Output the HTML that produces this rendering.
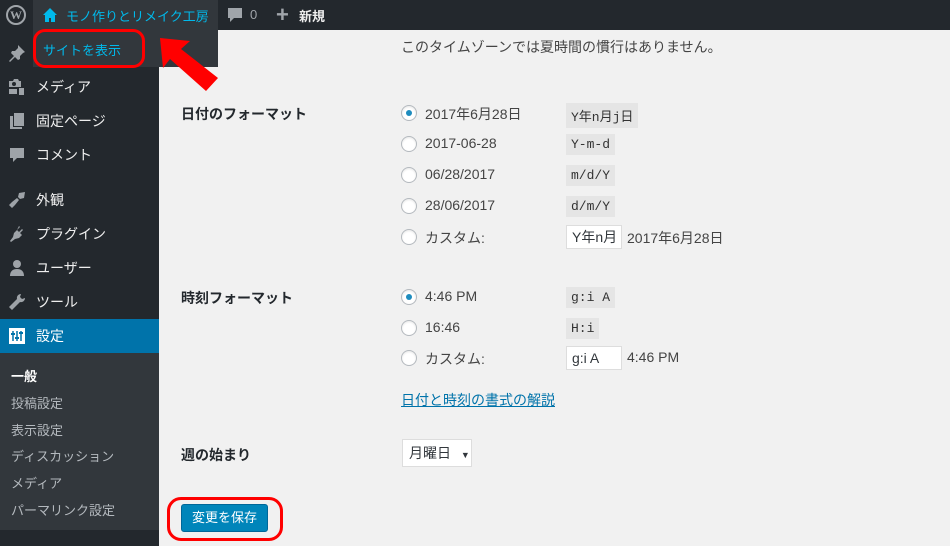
<!DOCTYPE html>
<html><head><meta charset="utf-8"><style>
*{margin:0;padding:0;box-sizing:border-box}
body{width:950px;height:546px;overflow:hidden;background:#f1f1f1;font-family:"Liberation Sans","Noto Sans CJK JP",sans-serif;font-size:14px;color:#23282d;position:relative}
.a{position:absolute;white-space:nowrap}
#bar{position:absolute;left:0;top:0;width:950px;height:30px;background:#23282d}
#side{position:absolute;left:0;top:30px;width:159px;height:516px;background:#23282d}
.mi{position:absolute;left:0;width:159px;height:34px;color:#eee;font-size:14px;line-height:34px;padding-left:36px}
.mi svg{position:absolute;left:8px;top:8px}
.sub{position:absolute;left:11px;color:#b4b9be;font-size:13px}
.radio{position:absolute;left:401px;width:16px;height:16px;border:1px solid #b4b9be;border-radius:50%;background:#fff;box-shadow:inset 0 1px 2px rgba(0,0,0,.1)}
.radio.on::after{content:"";position:absolute;left:4px;top:4px;width:6px;height:6px;border-radius:50%;background:#1e8cbe}
.lbl{position:absolute;left:425px;font-size:14px;color:#444}
code{position:absolute;left:566px;background:#e5e5e5;font-family:"Liberation Mono","Noto Sans CJK JP",monospace;font-size:13px;padding:3px 5px;color:#333}
.inp{position:absolute;left:566px;height:24px;width:56px;background:#fff;border:1px solid #ddd;font-size:14px;line-height:22px;padding-left:5px;color:#32373c}
.th{position:absolute;left:181px;font-weight:bold;font-size:14px;color:#23282d}
</style></head><body>
<div id="bar">
 <div class="a" style="left:6px;top:5px;width:20px;height:20px;border-radius:50%;border:2px solid #a0a5aa;color:#a0a5aa;font:bold 12px 'Liberation Serif',serif;text-align:center;line-height:16px">W</div>
 <div class="a" style="left:33px;top:0;width:185px;height:30px;background:#32373c"></div>
 <svg class="a" style="left:42px;top:7px" width="16" height="16" viewBox="0 0 16 16"><path d="M8 1L1 8h2v7h4v-4h2v4h4V8h2z" fill="#00b9eb"/></svg>
 <div class="a" style="left:66px;top:6px;color:#00b9eb;font-size:13px">モノ作りとリメイク工房</div>
 <svg class="a" style="left:227px;top:7px" width="16" height="16" viewBox="0 0 16 16"><path d="M1 1h14v10H7l-4 4v-4H1z" fill="#a0a5aa"/></svg>
 <div class="a" style="left:250px;top:7px;color:#a0a5aa;font-size:13px">0</div>
 <div class="a" style="left:276px;top:2px;color:#a0a5aa;font-size:22px;font-weight:bold;line-height:26px">+</div>
 <div class="a" style="left:299px;top:6px;color:#eee;font-size:13px;font-weight:bold">新規</div>
</div>
<div id="side">
 <div class="mi" style="top:6px"><svg width="18" height="18" viewBox="0 0 18 18"><path d="M10 1l7 7-2 1-3 3 0 3-2 1-3-3-5 5-1-1 5-5-3-3 1-2h3l3-3z" fill="#9ea3a8"/></svg></div>
 <div class="mi" style="top:40px"><svg width="18" height="18" viewBox="0 0 18 18"><path d="M1 3h4l1-2h4l1 2h2v6H1z M4 6a2 2 0 1 0 4 0a2 2 0 1 0-4 0z M11 10h5v7h-5zM1 11h8v5H1z" fill="#9ea3a8" fill-rule="evenodd"/></svg>メディア</div>
 <div class="mi" style="top:74px"><svg width="18" height="18" viewBox="0 0 18 18"><path d="M6 1h10v13H6z M2 4h3v11h9v2H2z" fill="#9ea3a8"/></svg>固定ページ</div>
 <div class="mi" style="top:108px"><svg width="18" height="18" viewBox="0 0 18 18"><path d="M2 2h14v10H9l-4 4v-4H2z" fill="#9ea3a8"/></svg>コメント</div>
 <div class="mi" style="top:153px"><svg width="18" height="18" viewBox="0 0 18 18"><path d="M11 2l6-1-1 6-4 1-2-2zM9 7l2 2-4 5-3 3-3-3 3-3z" fill="#9ea3a8"/></svg>外観</div>
 <div class="mi" style="top:187px"><svg width="18" height="18" viewBox="0 0 18 18"><path d="M11 1l1 1-3 3 2 2 3-3 1 1-3 3 2 2-3 3-4 1-4 3-1-1 3-4 1-4 3-3z" fill="#9ea3a8"/></svg>プラグイン</div>
 <div class="mi" style="top:221px"><svg width="18" height="18" viewBox="0 0 18 18"><circle cx="9" cy="5" r="4" fill="#9ea3a8"/><path d="M2 17c0-5 3-7 7-7s7 2 7 7z" fill="#9ea3a8"/></svg>ユーザー</div>
 <div class="mi" style="top:255px"><svg width="18" height="18" viewBox="0 0 18 18"><path d="M13 1a4 4 0 0 0-4 5L1 14l3 3 8-8a4 4 0 0 0 5-4l-3 1-2-2z" fill="#9ea3a8"/></svg>ツール</div>
 <div class="mi" style="top:289px;background:#0073aa;color:#fff"><svg width="18" height="18" viewBox="0 0 18 18"><rect x="1" y="1" width="16" height="16" fill="#fff"/><path d="M5 4v10M9 4v10M13 4v10" stroke="#0073aa" stroke-width="1.5"/><path d="M3 7h4M7 11h4M11 6h4" stroke="#0073aa" stroke-width="2"/></svg>設定</div>
 <div class="a" style="left:151px;top:298px;width:0;height:0;border:8px solid transparent;border-right-color:#f1f1f1"></div>
 <div class="a" style="left:0;top:323px;width:159px;height:177px;background:#32373c"></div>
 <div class="sub" style="top:336px;color:#fff;font-weight:bold">一般</div>
 <div class="sub" style="top:363px">投稿設定</div>
 <div class="sub" style="top:390px">表示設定</div>
 <div class="sub" style="top:416px">ディスカッション</div>
 <div class="sub" style="top:443px">メディア</div>
 <div class="sub" style="top:470px">パーマリンク設定</div>
</div>
<div class="a" style="left:33px;top:30px;width:185px;height:37px;background:#32373c"></div>
<div class="a" style="left:43px;top:40px;color:#00b9eb;font-size:13px">サイトを表示</div>
<div class="a" style="left:33px;top:29px;width:112px;height:39px;border:3px solid #f00;border-radius:12px"></div>
<svg class="a" style="left:0;top:0" width="950" height="546"><polygon points="160,38 190,41 181,49 218,78 206,91 170,59 163,68" fill="#f00"/></svg>
<div class="a" style="left:401px;top:37px;font-size:14px;color:#444">このタイムゾーンでは夏時間の慣行はありません。</div>
<div class="th" style="top:104px">日付のフォーマット</div>
<div class="radio on" style="top:105px"></div><div class="lbl" style="top:104px">2017年6月28日</div><code style="top:103px">Y年n月j日</code>
<div class="radio" style="top:136px"></div><div class="lbl" style="top:135px">2017-06-28</div><code style="top:134px">Y-m-d</code>
<div class="radio" style="top:167px"></div><div class="lbl" style="top:166px">06/28/2017</div><code style="top:165px">m/d/Y</code>
<div class="radio" style="top:198px"></div><div class="lbl" style="top:197px">28/06/2017</div><code style="top:196px">d/m/Y</code>
<div class="radio" style="top:229px"></div><div class="lbl" style="top:228px">カスタム:</div><div class="inp" style="top:225px">Y年n月</div><div class="lbl" style="left:627px;top:228px">2017年6月28日</div>
<div class="th" style="top:288px">時刻フォーマット</div>
<div class="radio on" style="top:289px"></div><div class="lbl" style="top:288px">4:46 PM</div><code style="top:287px">g:i A</code>
<div class="radio" style="top:320px"></div><div class="lbl" style="top:319px">16:46</div><code style="top:318px">H:i</code>
<div class="radio" style="top:350px"></div><div class="lbl" style="top:349px">カスタム:</div><div class="inp" style="top:346px">g:i A</div><div class="lbl" style="left:627px;top:349px">4:46 PM</div>
<div class="a" style="left:401px;top:390px;color:#0073aa;text-decoration:underline">日付と時刻の書式の解説</div>
<div class="th" style="top:445px">週の始まり</div>
<div class="a" style="left:402px;top:439px;width:70px;height:28px;background:#fff;border:1px solid #ddd;font-size:14px;line-height:26px;padding-left:6px;color:#32373c">月曜日 <span style="font-size:9px;margin-left:6px">▼</span></div>
<div class="a" style="left:167px;top:497px;width:116px;height:44px;border:3px solid #f00;border-radius:14px"></div>
<div class="a" style="left:181px;top:504px;width:87px;height:28px;background:#0085ba;border:1px solid #006799;border-radius:3px;color:#fff;font-size:13px;line-height:26px;text-align:center">変更を保存</div>
</body></html>
